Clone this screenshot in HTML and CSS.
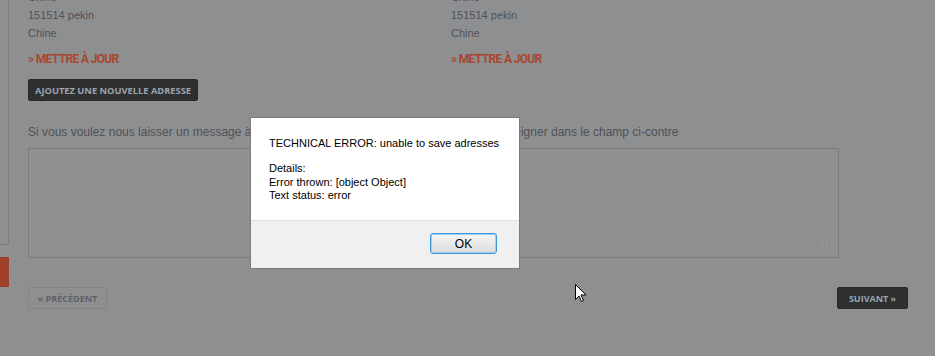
FILE: index.html
```html
<!DOCTYPE html>
<html lang="fr">
  <head>
    <meta charset="UTF-8" />
    <title>Adresses</title>
    <link rel="stylesheet" href="styles.css">
  </head>
  <body>
    <div class="page">
      <div class="sidebar">
        <div class="side-box"></div>
        <div class="side-tab"></div>
      </div>

      <div class="main">
        <div class="addresses">
          <div class="address">
            <p>Chine</p>
            <p>151514 pekin</p>
            <p>Chine</p>
            <a class="update" href="#">» METTRE À JOUR</a>
          </div>
          <div class="address">
            <p>Chine</p>
            <p>151514 pekin</p>
            <p>Chine</p>
            <a class="update" href="#">» METTRE À JOUR</a>
          </div>
        </div>

        <button class="btn btn-dark btn-add">AJOUTEZ UNE NOUVELLE ADRESSE</button>

        <p class="message-label">Si vous voulez nous laisser un message à propos de votre commande, vous pouvez le renseigner dans le champ ci-contre</p>
        <div class="message-box">
          <svg class="grip" width="8" height="8" viewBox="0 0 8 8">
            <rect x="6" y="0" width="1" height="1" />
            <rect x="3" y="3" width="1" height="1" />
            <rect x="6" y="3" width="1" height="1" />
            <rect x="0" y="6" width="1" height="1" />
            <rect x="3" y="6" width="1" height="1" />
            <rect x="6" y="6" width="1" height="1" />
          </svg>
        </div>

        <div class="steps">
          <button class="btn btn-light">« PRÉCÉDENT</button>
          <button class="btn btn-dark">SUIVANT »</button>
        </div>
      </div>
    </div>

    <!-- alert box over the dimmed page -->
    <div class="dialog">
      <div class="dialog-body">
        <p class="dialog-title">TECHNICAL ERROR: unable to save adresses</p>
        <p class="dialog-details">Details:<br />Error thrown: [object Object]<br />Text status: error</p>
      </div>
      <div class="dialog-footer">
        <button class="ok">OK</button>
      </div>
    </div>

    <svg class="cursor" width="12" height="19" viewBox="0 0 12 19">
      <path d="M0.5 0.5 L0.5 15.5 L4 12 L6.5 17.5 L8.5 16.5 L6 11 L11 11 Z" fill="#fff" stroke="#000" stroke-width="1" />
    </svg>
  </body>
</html>
```

FILE: styles.css
```css
html,
body {
  margin: 0;
  padding: 0;
  height: 356px;
  overflow: hidden;
}

body {
  background-color: #8e8f91;
  font-family: "Liberation Sans", Arial, sans-serif;
  color: #505257;
  position: relative;
}

p {
  margin: 0;
}

.page {
  display: flex;
}

/* left column (dimmed) */
.sidebar {
  width: 9px;
  flex: none;
}

.side-box {
  height: 245px;
  border-right: 1px solid #7b7c7e;
  border-bottom: 1px solid #7b7c7e;
  box-sizing: border-box;
}

.side-tab {
  margin-top: 12px;
  height: 30px;
  background-color: #a0402c;
}

.main {
  padding-left: 19px;
  width: 811px;
  flex: none;
}

.addresses {
  display: flex;
  margin-top: -12px;
}

.address {
  width: 423px;
  flex: none;
  font-size: 11px;
  line-height: 18px;
}

.update {
  display: block;
  margin-top: 8px;
  font-family: Roboto, sans-serif;
  font-weight: 700;
  font-size: 12px;
  letter-spacing: -0.65px;
  color: #a8472f;
  text-decoration: none;
}

.btn {
  font-family: "Open Sans", sans-serif;
  font-weight: 700;
  font-size: 9px;
  height: 22px;
  padding: 0;
  border-radius: 2px;
  cursor: pointer;
}

.btn-dark {
  background-color: #2e2f31;
  border: 1px solid #262728;
  color: #9aa3ad;
}

.btn-light {
  background-color: transparent;
  border: 1px solid #838486;
  color: #5d6168;
}

.btn-add {
  display: block;
  margin-top: 11px;
  width: 170px;
  font-size: 9.3px;
}

.message-label {
  margin-top: 24px;
  font-size: 12px;
  line-height: 14px;
}

.message-box {
  position: relative;
  margin-top: 9px;
  height: 108px;
  border: 1px solid #7a7b7d;
}

.grip {
  position: absolute;
  right: 10px;
  bottom: 10px;
  fill: #a8a9ab;
}

.steps {
  display: flex;
  justify-content: space-between;
  margin-top: 29px;
  width: 880px;
}

.steps .btn-light {
  width: 79px;
}

.steps .btn-dark {
  width: 71px;
}

/* alert */
.dialog {
  position: absolute;
  left: 250px;
  top: 117px;
  width: 268px;
  border: 1px solid #7c7c7c;
  background-color: #fff;
  font-family: "Liberation Sans", Arial, sans-serif;
  font-size: 11px;
  color: #000;
}

.dialog-body {
  height: 102px;
  padding: 19px 0 0 18px;
  box-sizing: border-box;
  white-space: nowrap;
}

.dialog-details {
  margin-top: 13px;
  line-height: 13.5px;
}

.dialog-footer {
  height: 48px;
  background-color: #f0f0f0;
  border-top: 1px solid #dfdfdf;
  display: flex;
  justify-content: flex-end;
  align-items: flex-start;
  padding: 12px 22px 0 0;
  box-sizing: border-box;
}

.ok {
  width: 67px;
  height: 21px;
  border: 1px solid #3c96dc;
  border-radius: 3px;
  background: linear-gradient(#f6f6f6, #dcdcdc);
  box-shadow: inset 0 0 0 1px #9fd0f5;
  font-family: "Liberation Sans", Arial, sans-serif;
  font-size: 12px;
  color: #000;
  padding: 0;
}

.cursor {
  position: absolute;
  left: 575px;
  top: 284px;
}
```
